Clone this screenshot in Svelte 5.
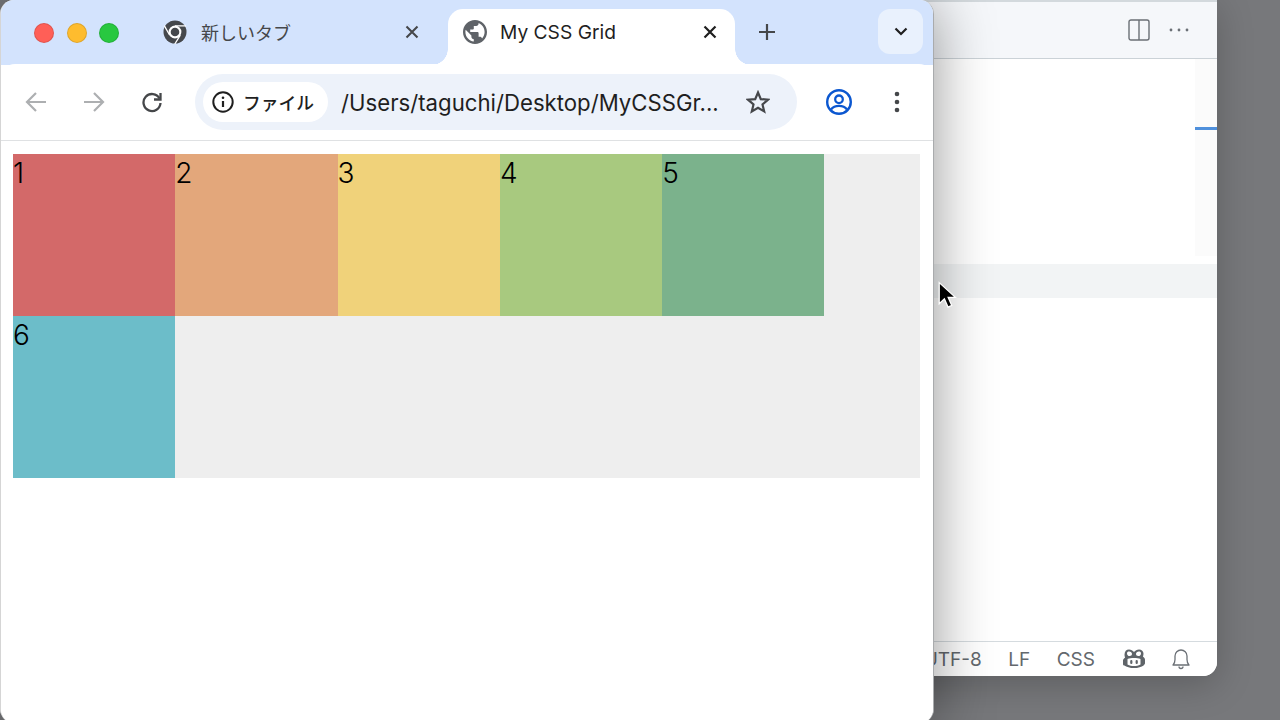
<script>
  const cells = [
    { n: 1, color: "#d36969" },
    { n: 2, color: "#e3a77b" },
    { n: 3, color: "#f0d27a" },
    { n: 4, color: "#a8c97f" },
    { n: 5, color: "#7bb28c" },
    { n: 6, color: "#6cbdc9" },
  ];
</script>

<div class="desktop">
  <!-- editor window behind the browser -->
  <section class="editor">
    <header class="editor-title">
      <svg class="split" viewBox="0 0 22 22" width="22" height="22">
        <rect x="1" y="1" width="20" height="20" rx="2" fill="none" stroke="#6b7076" stroke-width="1.4" />
        <path d="M11 1v20" stroke="#6b7076" stroke-width="1.4" />
      </svg>
      <svg class="more" viewBox="0 0 22 4" width="22" height="4">
        <circle cx="2" cy="2" r="1.4" fill="#6b7076" />
        <circle cx="10" cy="2" r="1.4" fill="#6b7076" />
        <circle cx="18" cy="2" r="1.4" fill="#6b7076" />
      </svg>
    </header>
    <div class="editor-main">
      <div class="panes">
        <div class="minimap"><div class="slider"></div></div>
      </div>
      <div class="line-highlight"></div>
    </div>
    <footer class="status">
      <span>UTF-8</span>
      <span>LF</span>
      <span>CSS</span>
      <svg viewBox="0 0 24 22" width="24" height="22">
        <path d="M7 1.500c2.200 0 3.600 1 5 2.600 1.400-1.600 2.800-2.600 5-2.600 2.600 0 4.500 1.800 4.500 4.200 0 1.100-.2 2.100-.6 2.800 1.200.9 2.100 2 2.100 3.300v3.300c0 1-.5 1.700-1.400 2.300-2 1.400-5.600 2.700-9.600 2.700s-7.600-1.300-9.600-2.700C1.500 17.800 1 17.100 1 16.100v-3.300c0-1.300.9-2.400 2.100-3.300-.4-.7-.6-1.700-.6-2.800C2.500 3.300 4.400 1.500 7 1.500z" fill="#5f6469" />
        <path d="M5 5.200c0-1 .9-1.700 2.200-1.700 1.500 0 2.800 1 2.800 2.600 0 1.300-.9 2-2.400 2C6 8.100 5 7 5 5.200zM19 5.200c0-1-.9-1.700-2.200-1.700-1.500 0-2.800 1-2.800 2.600 0 1.300.9 2 2.400 2 1.600 0 2.600-1.100 2.600-2.900zM5.500 11c2-.9 3.900-1 6.500-1s4.500.1 6.500 1v5.500c-2 1-4.300 1.500-6.500 1.500s-4.500-.5-6.500-1.500z" fill="#fff" />
        <rect x="8.200" y="12" width="2.200" height="4" rx="1.100" fill="#5f6469" />
        <rect x="13.600" y="12" width="2.200" height="4" rx="1.100" fill="#5f6469" />
      </svg>
      <svg class="bell" viewBox="0 0 18 22" width="18" height="22">
        <path d="M1 17c1.600-1.500 2-3 2-5.500V8a6 6 0 0 1 12 0v3.500c0 2.500.4 4 2 5.500z" fill="none" stroke="#6b7076" stroke-width="1.3" stroke-linejoin="round" />
        <path d="M7 18.500a2 2 0 0 0 4 0" fill="none" stroke="#6b7076" stroke-width="1.300" />
      </svg>
    </footer>
  </section>

  <!-- browser window -->
  <section class="browser">
    <div class="tabstrip">
      <div class="lights">
        <i class="red"></i><i class="yellow"></i><i class="green"></i>
      </div>
      <div class="tab">
        <svg viewBox="0 0 24 24" width="24" height="24">
          <circle cx="12" cy="12" r="11.500" fill="#45484c" />
          <circle cx="12" cy="12" r="6.400" fill="#fff" />
          <circle cx="12" cy="12" r="4.300" fill="#45484c" />
          <path d="M12 5.800h11M6.700 15.200 1.300 5.600M17.300 15.100 11.800 24" stroke="#fff" stroke-width="1.300" fill="none" />
        </svg>
        <span class="tab-title">新しいタブ</span>
        <svg class="close" viewBox="0 0 14 14" width="14" height="14">
          <path d="M1.500 1.500l11 11M12.500 1.500l-11 11" stroke="#45474a" stroke-width="2.100" />
        </svg>
      </div>
      <div class="tab active">
        <svg viewBox="2 2 20 20" width="24" height="24">
          <path fill="#5f6368" d="M12 2C6.480 2 2 6.480 2 12s4.480 10 10 10 10-4.480 10-10S17.520 2 12 2zm-1 17.930c-3.950-.49-7-3.850-7-7.930 0-.62.08-1.210.21-1.790L9 15v1c0 1.100.9 2 2 2v1.930zm6.900-2.540c-.26-.81-1-1.390-1.900-1.390h-1v-3c0-.55-.45-1-1-1H8v-2h2c.55 0 1-.45 1-1V7h2c1.100 0 2-.9 2-2v-.41c2.930 1.190 5 4.060 5 7.410 0 2.080-.8 3.970-2.100 5.390z" />
        </svg>
        <span class="tab-title">My CSS Grid</span>
        <svg class="close" viewBox="0 0 14 14" width="14" height="14">
          <path d="M1.500 1.500l11 11M12.500 1.500l-11 11" stroke="#1f1f1f" stroke-width="2.200" />
        </svg>
      </div>
      <svg class="plus" viewBox="0 0 18 18" width="18" height="18">
        <path d="M9 1v16M1 9h16" stroke="#45474a" stroke-width="2.200" />
      </svg>
      <div class="tab-search">
        <svg viewBox="0 0 14 9" width="14" height="9">
          <path d="M1.500 1.500 7 7l5.500-5.500" fill="none" stroke="#1f1f1f" stroke-width="2.200" />
        </svg>
      </div>
    </div>

    <div class="toolbar">
      <svg class="nav" viewBox="0 0 22 22" width="22" height="22">
        <path d="M21 11H2M11 2l-9 9 9 9" fill="none" stroke="#adafb1" stroke-width="2.200" />
      </svg>
      <svg class="nav" viewBox="0 0 22 22" width="22" height="22">
        <path d="M1 11h19M11 2l9 9-9 9" fill="none" stroke="#adafb1" stroke-width="2.200" />
      </svg>
      <svg class="nav" viewBox="0 0 22 22" width="22" height="22">
        <path d="M18.500 7.500A8.500 8.500 0 1 0 19.500 12" fill="none" stroke="#45474a" stroke-width="2.300" />
        <path d="M19.500 2v6.500H13" fill="none" stroke="#45474a" stroke-width="2.300" />
      </svg>
      <div class="omnibox">
        <div class="chip">
          <svg viewBox="0 0 22 22" width="22" height="22">
            <circle cx="11" cy="11" r="9.700" fill="none" stroke="#1f1f1f" stroke-width="2" />
            <path d="M11 10v6" stroke="#1f1f1f" stroke-width="2.200" />
            <circle cx="11" cy="6.800" r="1.300" fill="#1f1f1f" />
          </svg>
          <span>ファイル</span>
        </div>
        <span class="url">/Users/taguchi/Desktop/MyCSSGr...</span>
        <svg class="star" viewBox="0 0 24 24" width="24" height="24">
          <path d="M12 2.500l2.800 6.600 7.200.6-5.500 4.700 1.700 7-6.200-3.700-6.200 3.700 1.700-7L2 9.700l7.200-.6z" fill="none" stroke="#45474a" stroke-width="2.200" stroke-linejoin="miter" />
        </svg>
      </div>
      <svg class="account" viewBox="0 0 26 26" width="26" height="26">
        <circle cx="13" cy="13" r="11.800" fill="none" stroke="#0b57d0" stroke-width="2.400" />
        <circle cx="13" cy="10.300" r="3.800" fill="none" stroke="#0b57d0" stroke-width="2.300" />
        <path d="M5 20.500c2-2.700 5-3.600 8-3.600s6 .9 8 3.600" fill="none" stroke="#0b57d0" stroke-width="2.300" />
      </svg>
      <svg class="kebab" viewBox="0 0 6 24" width="6" height="24">
        <circle cx="3" cy="4" r="2.300" fill="#45474a" />
        <circle cx="3" cy="12" r="2.300" fill="#45474a" />
        <circle cx="3" cy="20" r="2.300" fill="#45474a" />
      </svg>
    </div>

    <main class="page">
      <div class="grid">
        {#each cells as cell}
          <div class="cell" style="background: {cell.color}">{cell.n}</div>
        {/each}
      </div>
    </main>
  </section>

  <svg class="cursor" viewBox="0 0 20 28" width="21" height="29">
    <path d="M2 1.500v20.500l5-4.800 3.500 8 3.600-1.600-3.500-7.800h7z" fill="#000" stroke="#fff" stroke-width="1.200" />
  </svg>
</div>

<style>
  :global(body) {
    background: #77787b;
    overflow: hidden;
  }

  .desktop {
    position: relative;
    width: 1280px;
    height: 720px;
    overflow: hidden;
    background: #77787b;
    font-family: Inter, "Noto Sans CJK JP", sans-serif;
  }

  /* windows on the desktop */
  .editor {
    position: absolute;
    left: 500px;
    top: 0;
    width: 717px;
    height: 676px;
    display: flex;
    flex-direction: column;
    background: #fff;
    border-radius: 0 0 14px 14px;
    overflow: hidden;
    box-shadow: 0 8px 36px rgba(0, 0, 0, 0.22);
  }

  .editor-title {
    height: 57px;
    margin-top: 2px;
    flex: none;
    display: flex;
    align-items: center;
    justify-content: flex-end;
    gap: 19px;
    padding-right: 26px;
    background: #f5f7fa;
    box-sizing: border-box;
    box-shadow: 0 -2px 0 #d3d9dd;
    border-bottom: 1px solid #cbd2d7;
  }

  .editor-main {
    flex: 1;
    display: flex;
    flex-direction: column;
  }

  .panes {
    height: 197px;
    display: flex;
    justify-content: flex-end;
  }

  .minimap {
    width: 22px;
    background: #fbfbfb;
  }

  .slider {
    height: 3px;
    margin-top: 68px;
    background: #4f90dc;
  }

  .line-highlight {
    height: 34px;
    margin-top: 8px;
    background: #f2f4f5;
  }

  .status {
    height: 35px;
    flex: none;
    box-sizing: border-box;
    border-top: 1px solid #d5dbdf;
    display: flex;
    align-items: center;
    justify-content: flex-end;
    padding-right: 27px;
    gap: 26.500px;
    font-size: 19px;
    color: #63686d;
    background: #fff;
  }

  .browser {
    position: absolute;
    z-index: 2;
    left: 0;
    top: 0;
    width: 934px;
    height: 723px;
    box-sizing: border-box;
    display: flex;
    flex-direction: column;
    background: #fff;
    border-radius: 14px;
    overflow: hidden;
    border-right: 1px solid #a9abad;
    border-left: 1px solid #d5d5d5;
  }

  .desktop::before {
    content: "";
    position: absolute;
    z-index: 1;
    left: 0;
    top: 0;
    width: 934px;
    height: 723px;
    border-radius: 14px;
    box-shadow: 0 4px 60px rgba(0, 0, 0, 0.42);
    pointer-events: none;
  }

  .tabstrip {
    height: 65px;
    flex: none;
    display: flex;
    align-items: flex-start;
    background: #d3e3fd;
    padding-top: 9px;
    box-sizing: border-box;
    position: relative;
  }

  .lights {
    display: flex;
    gap: 12.500px;
    padding: 14px 0 0 33px;
    width: 118px;
    box-sizing: border-box;
    flex: none;
  }

  .lights i {
    width: 20px;
    height: 20px;
    border-radius: 50%;
    box-sizing: border-box;
    border: 1px solid rgba(0, 0, 0, 0.12);
  }

  .red { background: #ff5f57; }
  .yellow { background: #febc2e; }
  .green { background: #28c840; }

  .tab {
    position: relative;
    width: 297px;
    height: 56px;
    flex: none;
    display: flex;
    align-items: center;
    padding: 0 29px 10px 12px;
    margin-left: 32px;
    box-sizing: border-box;
    gap: 14px;
    font-size: 19.200px;
    color: #45474a;
  }

  .tab.active {
    width: 287px;
    margin-left: 0;
    padding: 0 18px 10px 15px;
    gap: 13px;
    background: #fff;
    border-radius: 15px 15px 0 0;
    color: #1f1f1f;
  }

  .tab.active::before,
  .tab.active::after {
    content: "";
    position: absolute;
    bottom: 0;
    width: 16px;
    height: 16px;
  }

  .tab.active::before {
    left: -16px;
    background: radial-gradient(circle at 0 0, #d3e3fd 15.500px, #fff 16px);
  }

  .tab.active::after {
    right: -16px;
    background: radial-gradient(circle at 100% 0, #d3e3fd 15.500px, #fff 16px);
  }

  .tab-title {
    flex: 1;
    white-space: nowrap;
  }

  .tab:not(.active) .tab-title {
    font-family: "Noto Sans CJK JP", sans-serif;
    font-size: 18px;
  }

  .plus {
    margin: 14px 0 0 23px;
    flex: none;
  }

  .tab-search {
    margin-left: auto;
    margin-right: 10px;
    width: 45px;
    height: 45px;
    border-radius: 12px;
    background: #e9f1fd;
    display: flex;
    align-items: center;
    justify-content: center;
    flex: none;
  }

  .toolbar {
    height: 77px;
    margin-top: -1px;
    flex: none;
    box-sizing: border-box;
    display: flex;
    align-items: center;
    background: #fff;
    border-radius: 14px 14px 0 0;
    border-bottom: 1px solid #dfe1e3;
    padding: 0 0 0 24px;
    position: relative;
  }

  .nav {
    flex: none;
    margin-right: 36px;
  }

  .nav:nth-child(3) {
    margin-right: 32px;
  }

  .omnibox {
    width: 602px;
    height: 56px;
    flex: none;
    box-sizing: border-box;
    padding: 0 27px 0 8px;
    border-radius: 28px;
    background: #edf2fa;
    display: flex;
    align-items: center;
  }

  .chip {
    height: 40px;
    width: 125px;
    flex: none;
    box-sizing: border-box;
    padding-left: 9px;
    gap: 9px;
    background: #fff;
    border-radius: 20px;
    display: flex;
    align-items: center;
    font-family: "Noto Sans CJK JP", sans-serif;
    font-weight: 500;
    font-size: 17.800px;
    color: #1f1f1f;
  }

  .url {
    flex: 1;
    margin-left: 13px;
    font-size: 22.200px;
    color: #1f1f1f;
    white-space: nowrap;
  }

  .account {
    margin-left: 29px;
    flex: none;
  }

  .kebab {
    margin-left: 42px;
    flex: none;
  }

  .page {
    flex: 1;
    padding: 13px 13px 13px 12px;
    background: #fff;
  }

  .grid {
    display: grid;
    grid-template-columns: repeat(auto-fill, 162.300px);
    grid-auto-rows: 162px;
    background: #eee;
    font-family: Inter, sans-serif;
    font-weight: 350;
    font-size: 28px;
    line-height: 38px;
    color: #000;
  }

  .cursor {
    position: absolute;
    z-index: 3;
    left: 937px;
    top: 281px;
  }
</style>
